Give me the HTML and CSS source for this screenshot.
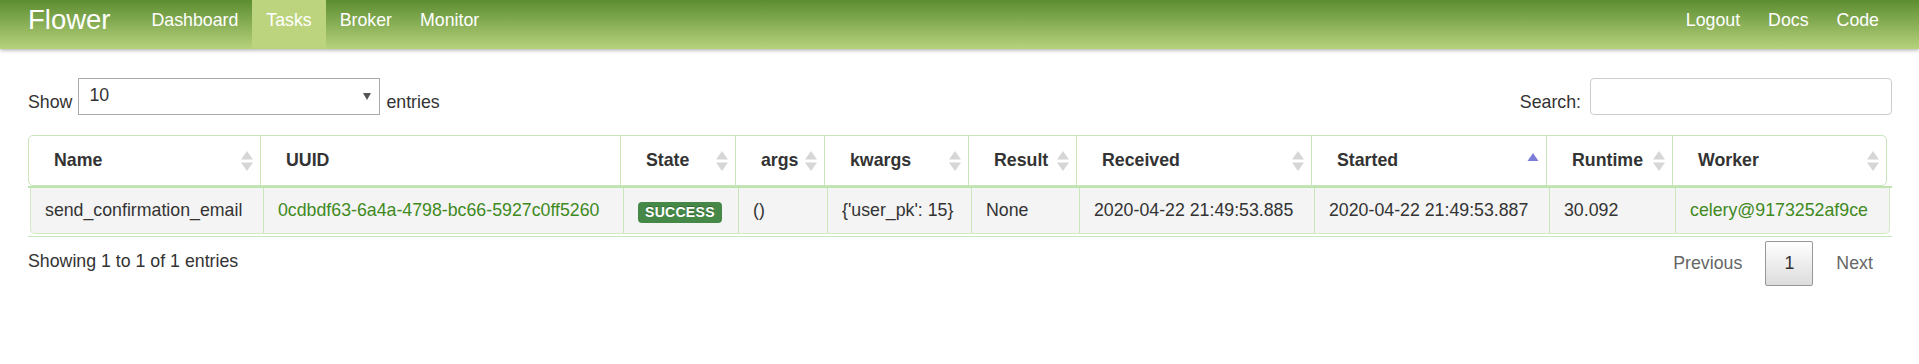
FILE: index.html
```html
<!DOCTYPE html>
<html lang="en">
<head>
    <meta charset="UTF-8">
    <title>Flower - Tasks</title>
    <link rel="stylesheet" href="styles.css">
</head>
<body>
    <div class="navbar">
        <a class="brand" href="#">Flower</a>
        <ul class="nav">
            <li><a href="#dashboard">Dashboard</a></li>
            <li class="active"><a href="#tasks">Tasks</a></li>
            <li><a href="#broker">Broker</a></li>
            <li><a href="#monitor">Monitor</a></li>
        </ul>
        <ul class="nav nav-right">
            <li><a href="#logout">Logout</a></li>
            <li><a href="#docs">Docs</a></li>
            <li><a href="#code">Code</a></li>
        </ul>
    </div>

    <div class="container">
        <div class="dt-top">
            <div class="dt-length">
                <span>Show</span>
                <div class="select"><span>10</span><span class="caret"></span></div>
                <span>entries</span>
            </div>
            <div class="dt-filter">
                <span>Search:</span>
                <input type="search">
            </div>
        </div>

        <div class="dt-scroll">
            <div class="dt-head">
                <table>
                    <colgroup>
                        <col class="c-name"><col class="c-uuid"><col class="c-state"><col class="c-args"><col class="c-kwargs">
                        <col class="c-result"><col class="c-received"><col class="c-started"><col class="c-runtime"><col class="c-worker">
                    </colgroup>
                    <thead>
                        <tr>
                            <th>Name<svg class="sort" viewBox="0 0 12 20"><polygon points="0,8.5 6,0 12,8.5"/><polygon points="0,11.5 6,20 12,11.5"/></svg></th>
                            <th>UUID</th>
                            <th>State<svg class="sort" viewBox="0 0 12 20"><polygon points="0,8.5 6,0 12,8.5"/><polygon points="0,11.5 6,20 12,11.5"/></svg></th>
                            <th>args<svg class="sort" viewBox="0 0 12 20"><polygon points="0,8.5 6,0 12,8.5"/><polygon points="0,11.5 6,20 12,11.5"/></svg></th>
                            <th>kwargs<svg class="sort" viewBox="0 0 12 20"><polygon points="0,8.5 6,0 12,8.5"/><polygon points="0,11.5 6,20 12,11.5"/></svg></th>
                            <th>Result<svg class="sort" viewBox="0 0 12 20"><polygon points="0,8.5 6,0 12,8.5"/><polygon points="0,11.5 6,20 12,11.5"/></svg></th>
                            <th>Received<svg class="sort" viewBox="0 0 12 20"><polygon points="0,8.5 6,0 12,8.5"/><polygon points="0,11.5 6,20 12,11.5"/></svg></th>
                            <th>Started<svg class="sort sort-asc" viewBox="0 0 12 20"><polygon points="0.5,10 6,2 11.5,10"/></svg></th>
                            <th>Runtime<svg class="sort" viewBox="0 0 12 20"><polygon points="0,8.5 6,0 12,8.5"/><polygon points="0,11.5 6,20 12,11.5"/></svg></th>
                            <th>Worker<svg class="sort" viewBox="0 0 12 20"><polygon points="0,8.5 6,0 12,8.5"/><polygon points="0,11.5 6,20 12,11.5"/></svg></th>
                        </tr>
                    </thead>
                </table>
            </div>
            <div class="dt-body">
                <table>
                    <colgroup>
                        <col class="b-name"><col class="c-uuid"><col class="c-state"><col class="c-args"><col class="c-kwargs">
                        <col class="c-result"><col class="c-received"><col class="c-started"><col class="c-runtime"><col class="c-worker">
                    </colgroup>
                    <tbody>
                        <tr>
                            <td>send_confirmation_email</td>
                            <td><a href="#task">0cdbdf63-6a4a-4798-bc66-5927c0ff5260</a></td>
                            <td><span class="label label-success">SUCCESS</span></td>
                            <td>()</td>
                            <td>{'user_pk': 15}</td>
                            <td>None</td>
                            <td>2020-04-22 21:49:53.885</td>
                            <td>2020-04-22 21:49:53.887</td>
                            <td>30.092</td>
                            <td><a href="#worker">celery@9173252af9ce</a></td>
                        </tr>
                    </tbody>
                </table>
            </div>
        </div>

        <div class="dt-bottom">
            <div class="dt-info">Showing 1 to 1 of 1 entries</div>
            <div class="dt-paginate">
                <a class="paginate-button disabled">Previous</a>
                <a class="paginate-button current">1</a>
                <a class="paginate-button disabled">Next</a>
            </div>
        </div>
    </div>
</body>
</html>
```

FILE: styles.css
```css
:root {
    --text-color: #333;
    --link-color: #3f8a1e;
    --table-border: #c8e6b9;
    --table-line: #bfe3ae;
    --row-bg: #f4f4f4;
}

body {
    margin: 0;
    font-family: "Liberation Sans", Arial, sans-serif;
    font-size: 17.75px;
    line-height: 25px;
    color: var(--text-color);
    background-color: #fff;
}

a {
    color: var(--link-color);
    text-decoration: none;
}

/* top bar */
.navbar {
    display: flex;
    align-items: flex-start;
    height: 49px;
    padding: 0 26px 0 28px;
    background-image: linear-gradient(to bottom, #5c8d31, #b7d27c);
    box-shadow: 0 1px 4px rgba(0, 0, 0, 0.35);
}

.brand {
    font-size: 27.5px;
    line-height: 30px;
    padding: 5px 0 14px;
    margin-right: 27px;
    color: #fff;
}

.nav {
    display: flex;
    list-style: none;
    margin: 0;
    padding: 0;
}

.nav a {
    display: block;
    padding: 10px 14px 19px;
    line-height: 20px;
    color: #fff;
}

.nav .active a {
    background-color: #bcd47e;
}

.nav-right {
    margin-left: auto;
}

/* page */
.container {
    padding: 29px 27px 0 28px;
}

.dt-top {
    display: flex;
    justify-content: space-between;
    align-items: flex-end;
}

.dt-length,
.dt-filter {
    display: flex;
    align-items: flex-end;
    gap: 6px;
}

.dt-filter {
    gap: 9px;
}

.select {
    display: flex;
    justify-content: space-between;
    align-items: flex-start;
    box-sizing: border-box;
    width: 302px;
    height: 37px;
    padding: 4px 8px 0 10px;
    border: 1px solid #aaa;
    background-color: #fff;
}

.caret {
    margin-top: 10px;
    border-left: 4px solid transparent;
    border-right: 4px solid transparent;
    border-top: 7px solid #555;
}

.dt-filter input {
    box-sizing: border-box;
    width: 302px;
    height: 37px;
    margin: 0;
    padding: 0 8px;
    font: inherit;
    border: 1px solid #ccc;
    border-radius: 4px;
}

/* table */
.dt-scroll {
    margin-top: 20px;
}

.dt-scroll table {
    border-spacing: 0;
    table-layout: fixed;
}

.dt-head table {
    width: 1859px;
    border: 1px solid var(--table-border);
    border-radius: 5px;
}

th,
td {
    box-sizing: border-box;
    text-align: left;
    white-space: nowrap;
}

th {
    position: relative;
    padding: 12px 30px 12px 25px;
    font-weight: bold;
}

th + th,
td + td {
    border-left: 1px solid var(--table-border);
}

.sort {
    position: absolute;
    right: 7px;
    top: 50%;
    width: 12px;
    height: 20px;
    margin-top: -10px;
    fill: #d6d6d6;
}

.sort-asc {
    fill: #7b7ed6;
}

.dt-body {
    padding: 0 0 2px 2px;
    border-top: 2px solid var(--table-line);
    border-bottom: 1px solid var(--table-border);
}

.dt-body table {
    width: 1860px;
    border: 1px solid #d0eac4;
    border-top: 0;
    border-radius: 0 0 5px 5px;
    background-color: var(--row-bg);
}

td {
    padding: 10px 14px;
}

.c-name { width: 231px; }
.b-name { width: 232px; }
.c-uuid { width: 360px; }
.c-state { width: 115px; }
.c-args { width: 89px; }
.c-kwargs { width: 144px; }
.c-result { width: 108px; }
.c-received { width: 235px; }
.c-started { width: 235px; }
.c-runtime { width: 126px; }
.c-worker { width: 214px; }

.label {
    display: inline-block;
    padding: 2px 7px;
    font-size: 14px;
    line-height: 17px;
    font-weight: bold;
    letter-spacing: 0.3px;
    color: #fff;
    border-radius: 4px;
    vertical-align: -1px;
    text-shadow: 0 -1px 0 rgba(0, 0, 0, 0.25);
}

.label-success {
    background-color: #468847;
}

/* info + paging */
.dt-bottom {
    display: flex;
    justify-content: space-between;
}

.dt-info {
    padding-top: 12px;
}

.dt-paginate {
    display: flex;
    padding-top: 4px;
}

.paginate-button {
    margin-left: 3.7px;
    padding: 8.75px 18.2px;
    border: 1px solid transparent;
    border-radius: 2px;
    color: #666;
}

.paginate-button.current {
    color: #333;
    border-color: #979797;
    background-image: linear-gradient(to bottom, #fff, #dcdcdc);
}
```
